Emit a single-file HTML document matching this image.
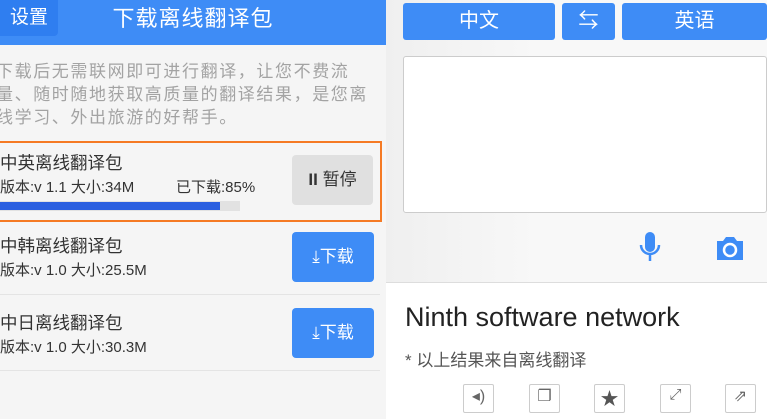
<!DOCTYPE html>
<html><head><meta charset="utf-8"><style>
*{margin:0;padding:0;box-sizing:border-box}
body{width:767px;height:419px;overflow:hidden;position:relative;background:#fff;font-family:"Liberation Sans","Noto Sans CJK SC",sans-serif}
.a{position:absolute}
.L{left:0;top:0;width:386px;height:419px;background:#f5f5f5}
.hd{left:0;top:0;width:386px;height:45px;background:#3e8cf6}
.set{left:0;top:0;width:58px;height:36px;background:#2f7ef0;border-radius:0 0 4px 0;color:#fff;font-size:19px;line-height:36px;text-align:center}
.title{left:0;top:0;width:386px;text-align:center;color:#fff;font-size:22px;line-height:38px;letter-spacing:1px}
.desc{left:-4px;top:60px;width:400px;color:#a3a3a3;font-size:17px;line-height:23px;letter-spacing:1.6px;white-space:nowrap}
.card{left:-3px;top:141px;width:385px;height:81px;border:2px solid #f57a24;border-left:none}
.nm{font-size:17.5px;color:#333}
.sub{font-size:15px;color:#333}
.btn{width:82px;height:50px;background:#3e8cf6;border-radius:4px;color:#fff;font-size:17px;line-height:50px;text-align:center}
.hr{left:0;width:380px;height:1px;background:#e4e4e4}
.R{left:386px;top:0;width:381px;height:283px;background:linear-gradient(90deg,#efefef,#f8f8f8 40%,#f8f8f8)}
.tb{top:3px;height:37px;background:#3e8cf6;border-radius:3px;color:#fff;font-size:20px;line-height:37px;text-align:center}
.ic{top:384px;width:31px;height:29px;border:1px solid #ccc;border-radius:2px;background:#fff}
</style></head><body>
<div class="a L"></div>
<div class="a hd"></div>
<div class="a set">设置</div>
<div class="a title">下载离线翻译包</div>
<div class="a desc">下载后无需联网即可进行翻译，让您不费流<br>量、随时随地获取高质量的翻译结果，是您离<br>线学习、外出旅游的好帮手。</div>
<div class="a card"></div>
<div class="a nm" style="left:0;top:150px">中英离线翻译包</div>
<div class="a sub" style="left:0;top:176px">版本:v 1.1 大小:34M</div>
<div class="a sub" style="left:176px;top:176px">已下载:85%</div>
<div class="a" style="left:292px;top:155px;width:81px;height:50px;background:#e0e0e0;border-radius:4px;color:#333;font-size:17px;line-height:50px;text-align:center"><b>II</b> 暂停</div>
<div class="a" style="left:0;top:201px;width:240px;height:10px;background:#e2e2e2"></div>
<div class="a" style="left:0;top:202px;width:220px;height:8px;background:#2b5fe0"></div>
<div class="a nm" style="left:0;top:233px">中韩离线翻译包</div>
<div class="a sub" style="left:0;top:259px">版本:v 1.0 大小:25.5M</div>
<div class="a btn" style="left:292px;top:232px">⤓下载</div>
<div class="a hr" style="top:294px"></div>
<div class="a nm" style="left:0;top:310px">中日离线翻译包</div>
<div class="a sub" style="left:0;top:336px">版本:v 1.0 大小:30.3M</div>
<div class="a btn" style="left:292px;top:308px">⤓下载</div>
<div class="a hr" style="top:370px"></div>
<div class="a R"></div>
<div class="a tb" style="left:403px;width:152px">中文</div>
<div class="a tb" style="left:562px;width:53px">⇆</div>
<div class="a tb" style="left:622px;width:145px">英语</div>
<div class="a" style="left:403px;top:56px;width:364px;height:157px;background:#fff;border:1px solid #ccc;border-radius:3px"></div>
<svg class="a" style="left:638px;top:230px" width="24" height="34" viewBox="0 0 24 34"><rect x="7" y="2" width="10" height="20" rx="5" fill="#3e8cf6"/><path d="M3 15a9 9 0 0 0 18 0M12 24v7" stroke="#3e8cf6" stroke-width="2.5" fill="none"/></svg>
<svg class="a" style="left:715px;top:235px" width="30" height="26" viewBox="0 0 30 26"><path d="M2 6h6l3-4h8l3 4h6v19H2z" fill="#3e8cf6"/><circle cx="15" cy="15" r="6" fill="none" stroke="#fff" stroke-width="2.5"/></svg>
<div class="a" style="left:386px;top:282px;width:381px;height:1px;background:#ddd"></div>
<div class="a" style="left:405px;top:302px;font-size:27px;color:#222">Ninth software network</div>
<div class="a" style="left:405px;top:346px;font-size:17px;color:#555">* 以上结果来自离线翻译</div>
<div class="a ic" style="left:463px"></div>
<div class="a ic" style="left:529px"></div>
<div class="a ic" style="left:594px"></div>
<div class="a ic" style="left:660px"></div>
<div class="a ic" style="left:725px"></div>
<div class="a" style="left:463px;top:386px;width:31px;text-align:center;color:#666;font-size:16px">◂)</div>
<div class="a" style="left:529px;top:386px;width:31px;text-align:center;color:#666;font-size:16px">❐</div>
<div class="a" style="left:594px;top:385px;width:31px;text-align:center;color:#555;font-size:18px">★</div>
<div class="a" style="left:660px;top:386px;width:31px;text-align:center;color:#666;font-size:15px">⤢</div>
<div class="a" style="left:725px;top:386px;width:31px;text-align:center;color:#666;font-size:16px">⇗</div>
</body></html>
